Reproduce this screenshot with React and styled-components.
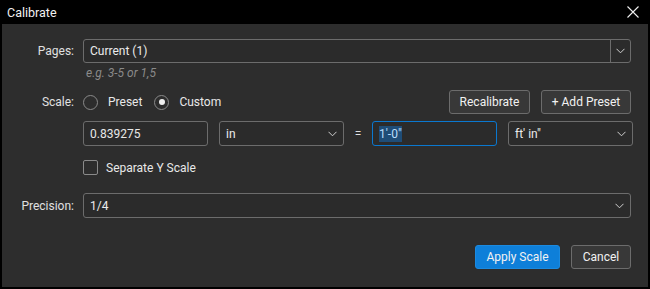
import React from "react"
import styled, { createGlobalStyle } from "styled-components"

const GlobalStyle = createGlobalStyle`
  html, body {
    margin: 0;
    padding: 0;
    background: #000;
  }
  body {
    font-family: Roboto, "Liberation Sans", sans-serif;
    font-size: 12px;
    color: #e8e8e8;
  }
`

const Window = styled.div`
  width: 650px;
  height: 289px;
  background: #000;
  display: flex;
  flex-direction: column;
  box-sizing: border-box;
  padding: 0 2px 2px 2px;
`
const TitleBar = styled.div`
  height: 24px;
  display: flex;
  align-items: center;
  justify-content: space-between;
  padding: 0 8px 0 5px;
  color: #f2f2f2;
  font-size: 12.5px;
`
const CloseBtn = styled.span`
  display: flex;
  width: 14px;
  height: 14px;
`
const Panel = styled.div`
  flex: 1;
  background: #2d2d2d;
  padding: 15px 17px 0 0;
  display: flex;
  flex-direction: column;
`
const Row = styled.div`
  display: grid;
  grid-template-columns: 72px 1fr;
  column-gap: 9px;
  align-items: center;
  margin-top: ${p => p.top || 0}px;
`
const Label = styled.label`
  text-align: right;
  color: #e0e0e0;
`
const Hint = styled.div`
  grid-column: 2;
  font-style: italic;
  color: #8a8a8a;
  font-size: 12px;
  line-height: 14px;
  padding-left: 3px;
`
const SelectBox = styled.div`
  height: ${p => p.h || 24}px;
  box-sizing: border-box;
  border: 1px solid #6c6c6c;
  border-radius: 3px;
  display: flex;
  align-items: center;
  background: #2b2b2b;
  width: ${p => (p.w ? p.w + "px" : "auto")};
`
const SelectText = styled.span`
  flex: 1;
  padding-left: 6px;
  color: #ececec;
`
const Chevron = styled.span`
  width: ${p => (p.split ? 19 : 22)}px;
  align-self: stretch;
  display: flex;
  align-items: center;
  justify-content: center;
  border-left: ${p => (p.split ? "1px solid #6c6c6c" : "none")};
`
const ScaleLine = styled.div`
  display: flex;
  align-items: center;
  justify-content: space-between;
  height: 24px;
`
const RadioGroup = styled.div`
  display: flex;
  align-items: center;
`
const RadioItem = styled.span`
  display: flex;
  align-items: center;
  margin-right: 12px;
  gap: 10px;
`
const RadioCircle = styled.span`
  width: 15px;
  height: 15px;
  box-sizing: border-box;
  border: 1px solid #8a8a8a;
  border-radius: 50%;
  display: flex;
  align-items: center;
  justify-content: center;
  &::after {
    content: "";
    width: 6px;
    height: 6px;
    border-radius: 50%;
    background: ${p => (p.checked ? "#f0f0f0" : "transparent")};
  }
`
const ButtonGroup = styled.div`
  display: flex;
  gap: 11px;
`
const Button = styled.button`
  height: 24px;
  width: ${p => p.w}px;
  box-sizing: border-box;
  border-radius: 3px;
  border: 1px solid ${p => (p.primary ? "#1b8ae0" : "#6c6c6c")};
  background: ${p => (p.primary ? "#0e7fd9" : "#383838")};
  color: #f2f2f2;
  font-family: Roboto, "Liberation Sans", sans-serif;
  font-size: 12px;
  padding: 0;
`
const InputRow = styled.div`
  grid-column: 2;
  display: flex;
  align-items: center;
`
const TextInput = styled.div`
  height: 25px;
  width: ${p => p.w}px;
  box-sizing: border-box;
  border: 1px solid ${p => (p.focused ? "#0a78d0" : "#6c6c6c")};
  border-radius: 3px;
  display: flex;
  align-items: center;
  padding-left: 6px;
  background: #2b2b2b;
`
const Selected = styled.span`
  background: #1f4d77;
  color: #b9dcfb;
  padding: 1px 0;
`
const Equals = styled.span`
  width: 28px;
  text-align: center;
  color: #e0e0e0;
`
const CheckRow = styled.div`
  grid-column: 2;
  display: flex;
  align-items: center;
  gap: 8px;
`
const CheckBox = styled.span`
  width: 15px;
  height: 15px;
  box-sizing: border-box;
  border: 1px solid #8a8a8a;
  border-radius: 2px;
`
const Footer = styled.div`
  display: flex;
  justify-content: flex-end;
  gap: 11px;
  margin-top: 27px;
`

const ChevronIcon = () => (
  <svg width="9" height="6" viewBox="0 0 9 6">
    <path d="M0.5 0.8 L4.5 4.8 L8.5 0.8" fill="none" stroke="#d0d0d0" strokeWidth="1" />
  </svg>
)

function App() {
  return (
    <>
      <GlobalStyle />
      <Window>
        <TitleBar>
          <span>Calibrate</span>
          <CloseBtn>
            <svg width="14" height="14" viewBox="0 0 14 14">
              <path d="M1.5 1.5 L12.5 12.5 M12.5 1.5 L1.5 12.5" stroke="#f0f0f0" strokeWidth="1.1" />
            </svg>
          </CloseBtn>
        </TitleBar>
        <Panel>
          <Row>
            <Label>Pages:</Label>
            <SelectBox>
              <SelectText>Current (1)</SelectText>
              <Chevron split>
                <ChevronIcon />
              </Chevron>
            </SelectBox>
          </Row>
          <Row top={3}>
            <Hint>e.g. 3-5 or 1,5</Hint>
          </Row>
          <Row top={10}>
            <Label>Scale:</Label>
            <ScaleLine>
              <RadioGroup>
                <RadioItem>
                  <RadioCircle />
                  Preset
                </RadioItem>
                <RadioItem>
                  <RadioCircle checked />
                  Custom
                </RadioItem>
              </RadioGroup>
              <ButtonGroup>
                <Button w={81}>Recalibrate</Button>
                <Button w={90}>+ Add Preset</Button>
              </ButtonGroup>
            </ScaleLine>
          </Row>
          <Row top={7}>
            <InputRow>
              <TextInput w={125}>0.839275</TextInput>
              <SelectBox w={125} h={25} style={{ marginLeft: 11 }}>
                <SelectText>in</SelectText>
                <Chevron>
                  <ChevronIcon />
                </Chevron>
              </SelectBox>
              <Equals>=</Equals>
              <TextInput w={125} focused>
                <Selected>1'-0"</Selected>
              </TextInput>
              <SelectBox w={125} h={25} style={{ marginLeft: 11 }}>
                <SelectText>ft' in"</SelectText>
                <Chevron>
                  <ChevronIcon />
                </Chevron>
              </SelectBox>
            </InputRow>
          </Row>
          <Row top={14}>
            <CheckRow>
              <CheckBox />
              Separate Y Scale
            </CheckRow>
          </Row>
          <Row top={18}>
            <Label>Precision:</Label>
            <SelectBox h={25}>
              <SelectText>1/4</SelectText>
              <Chevron>
                <ChevronIcon />
              </Chevron>
            </SelectBox>
          </Row>
          <Footer>
            <Button primary w={85}>Apply Scale</Button>
            <Button w={60}>Cancel</Button>
          </Footer>
        </Panel>
      </Window>
    </>
  )
}

export default App
